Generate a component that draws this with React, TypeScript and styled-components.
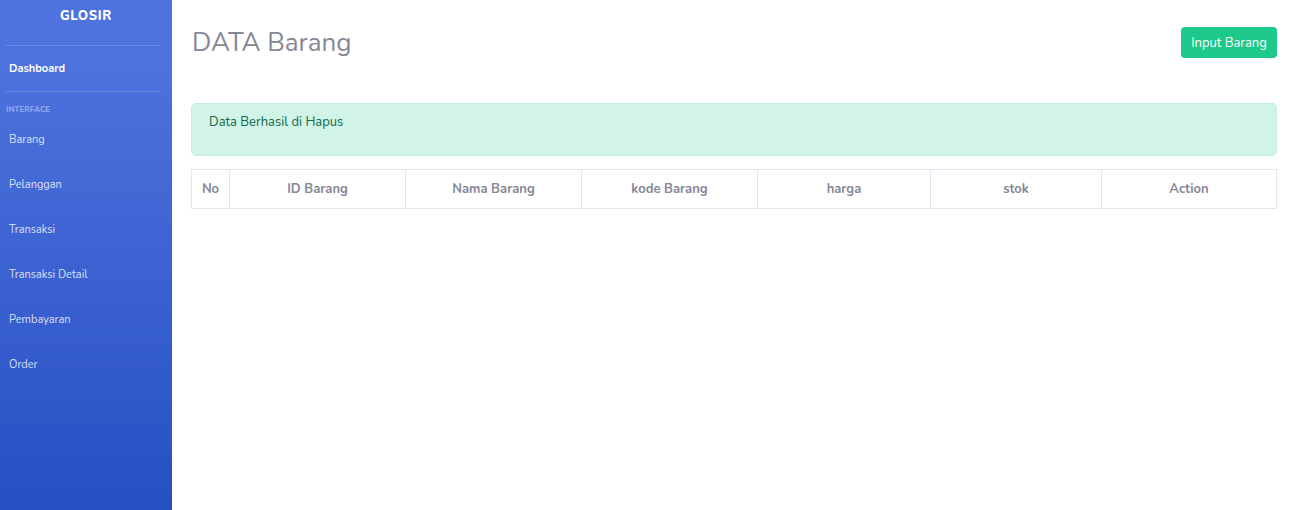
import React from "react";
import styled, { createGlobalStyle } from "styled-components";

const Global = createGlobalStyle`
  html, body { margin: 0; padding: 0; height: 100%; }
  body { font-family: "Nunito", "Lato", "Noto Sans", sans-serif; background: #fff; }
  #root { height: 100%; }
  * { box-sizing: border-box; }
`;

const Wrapper = styled.div`
  display: flex;
  min-height: 510px;
  height: 100%;
`;

const Sidebar = styled.nav`
  width: 172px;
  flex: 0 0 172px;
  background-color: #4e73df;
  background-image: linear-gradient(180deg, #4e73df 10%, #224abe 100%);
  background-size: 100% 570px;
  background-repeat: no-repeat;
  display: flex;
  flex-direction: column;
`;

const Brand = styled.div`
  height: 31px;
  display: flex;
  align-items: center;
  justify-content: center;
  color: #fff;
  font-weight: 800;
  font-size: 13px;
  letter-spacing: 0.05em;
  margin-bottom: 14px;
`;

const Divider = styled.hr`
  border: 0;
  border-top: 1px solid rgba(255, 255, 255, 0.18);
  margin: 0 13px 0 6px;
  height: 0;
`;

const NavLink = styled.a<{ $active?: boolean }>`
  display: flex;
  align-items: center;
  height: 45px;
  flex: 0 0 auto;
  padding-left: 9px;
  font-size: 11px;
  color: ${(p) => (p.$active ? "#fff" : "rgba(255,255,255,0.82)")};
  font-weight: ${(p) => (p.$active ? 700 : 400)};
  text-decoration: none;
`;

const Heading = styled.div`
  height: 25px;
  flex: 0 0 auto;
  padding: 14px 0 0 6px;
  font-size: 8px;
  line-height: 8px;
  font-weight: 800;
  color: rgba(255, 255, 255, 0.4);
  text-transform: uppercase;
`;

const Main = styled.main`
  flex: 1;
  padding: 24px 23px 0 19px;
`;

const Header = styled.div`
  display: flex;
  align-items: center;
  justify-content: space-between;
  height: 37px;
  margin-bottom: 42px;
`;

const Title = styled.h1`
  margin: 0 0 0 1px;
  font-size: 26px;
  font-weight: 400;
  color: #858796;
  line-height: 1.2;
`;

const Button = styled.a`
  display: inline-flex;
  align-items: center;
  justify-content: center;
  width: 96px;
  height: 31px;
  background: #1cc88a;
  border-radius: 4px;
  color: #fff;
  font-size: 13px;
  text-decoration: none;
`;

const Alert = styled.div`
  height: 53px;
  background: #d2f4e8;
  border: 1px solid #bff0de;
  border-radius: 5px;
  color: #0f6848;
  font-size: 13px;
  line-height: 21px;
  padding: 8px 17px 0;
  margin-bottom: 13px;
`;

const Table = styled.table`
  width: 100%;
  border-collapse: collapse;
  table-layout: fixed;
`;

const Th = styled.th<{ $w: number }>`
  width: ${(p) => p.$w}px;
  height: 39px;
  border: 1px solid #e3e6f0;
  color: #858796;
  font-size: 13px;
  font-weight: 700;
  text-align: center;
  padding: 0;
`;

const columns: [string, number][] = [
  ["No", 38],
  ["ID Barang", 176],
  ["Nama Barang", 176],
  ["kode Barang", 176],
  ["harga", 173],
  ["stok", 171],
  ["Action", 175],
];

const navItems = ["Barang", "Pelanggan", "Transaksi", "Transaksi Detail", "Pembayaran", "Order"];

export default function App() {
  return (
    <>
      <Global />
      <Wrapper>
        <Sidebar>
          <Brand>GLOSIR</Brand>
          <Divider />
          <NavLink $active>Dashboard</NavLink>
          <Divider />
          <Heading>Interface</Heading>
          {navItems.map((n) => (
            <NavLink key={n}>{n}</NavLink>
          ))}
        </Sidebar>
        <Main>
          <Header>
            <Title>DATA Barang</Title>
            <Button>Input Barang</Button>
          </Header>
          <Alert>Data Berhasil di Hapus</Alert>
          <Table>
            <thead>
              <tr>
                {columns.map(([c, w]) => (
                  <Th key={c} $w={w}>{c}</Th>
                ))}
              </tr>
            </thead>
          </Table>
        </Main>
      </Wrapper>
    </>
  );
}
